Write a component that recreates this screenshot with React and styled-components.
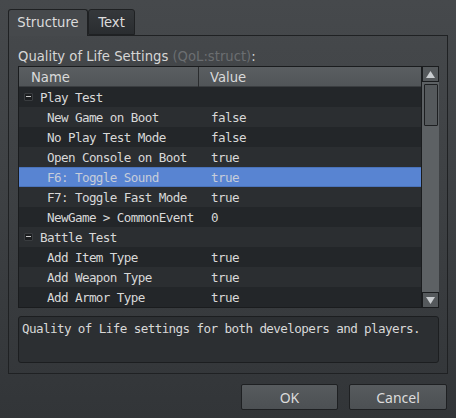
import React from "react";
import styled, { createGlobalStyle } from "styled-components";

const Global = createGlobalStyle`
  html, body { margin: 0; padding: 0; }
  body {
    width: 456px; height: 418px; overflow: hidden;
    background: linear-gradient(180deg, #46494c 0%, #3d4043 50%, #323538 100%);
    font-family: "DejaVu Sans", sans-serif;
  }
`;

const Window = styled.div`
  width: 456px; height: 418px; box-sizing: border-box;
  padding: 9px 9px 0 8px;
  display: flex; flex-direction: column;
`;

const TabBar = styled.div`
  display: flex; align-items: flex-end; height: 26px;
`;

const Tab = styled.div`
  box-sizing: border-box;
  width: ${p => p.$w}px;
  height: ${p => (p.$active ? 27 : 26)}px;
  margin-bottom: ${p => (p.$active ? -1 : 0)}px;
  display: flex; align-items: center; justify-content: center;
  border: 1px solid #1f2123;
  border-bottom: ${p => (p.$active ? "none" : "1px solid #1f2123")};
  border-radius: 3px 3px 0 0;
  background: ${p => (p.$active ? "#46494c" : "linear-gradient(180deg,#35383b,#2a2d30)")};
  color: #dcdcdc;
  font-size: 13.2px;
  position: relative; z-index: 1;
  ${p => (p.$active ? "padding-bottom: 1px;" : "margin-top: 1px;")}
`;

const Panel = styled.div`
  box-sizing: border-box;
  width: 440px; height: 339px;
  border: 1px solid #1f2123;
  padding: 0 8px 9px 9px;
  display: flex; flex-direction: column;
`;

const Label = styled.div`
  height: 20px; margin-top: 10px;
  font-size: 13.2px; line-height: 21px; color: #d6d6d6;
  span { color: #6b6e71; }
`;

const Table = styled.div`
  box-sizing: border-box; height: 242px;
  border: 1px solid #1a1c1e;
  display: flex; background: #25282b;
`;

const Main = styled.div`
  flex: 1; display: flex; flex-direction: column; min-width: 0;
`;

const Header = styled.div`
  height: 20px; display: grid; grid-template-columns: 180px 1fr;
  background: linear-gradient(180deg, #5a5e61, #505457);
  box-shadow: inset 0 -1px 0 #3a3d40;
`;

const HeadCell = styled.div`
  padding-left: ${p => p.$pad}px;
  font-size: 13.2px; line-height: 21px; color: #dadada;
  border-right: 1px solid ${p => (p.$divider ? "#2a2c2e" : "transparent")};
`;

const Row = styled.div`
  box-sizing: border-box;
  height: 20px; display: grid; grid-template-columns: 180px 1fr; align-items: center;
  background: ${p => (p.$selected ? "#5884d2" : p.$odd ? "#2b2e31" : "#232629")};
  ${p => p.$selected && "border-top: 1px solid #4a73bb; border-bottom: 1px solid #4a73bb;"}
  font-family: "DejaVu Sans Mono", monospace;
  font-size: 12.6px; letter-spacing: -0.6px;
  color: ${p => (p.$selected ? "#c6cdda" : "#d8d8d8")};
  white-space: nowrap;
`;

const NameCell = styled.div`
  padding-left: ${p => (p.$group ? 5 : 28)}px;
  display: flex; align-items: center; gap: 7px;
`;

const ValueCell = styled.div`
  padding-left: 12px;
`;

const Toggle = styled.span`
  width: 9px; height: 8px; box-sizing: border-box;
  background: #1c1e20; border: 1px solid #3a3d40; border-radius: 1px;
  position: relative;
  &::after {
    content: ""; position: absolute; left: 1px; right: 1px; top: 2px; height: 1px; background: #c8c8c8;
  }
`;

const ScrollBar = styled.div`
  width: 17px; margin: -1px -1px -1px 0; display: flex; flex-direction: column;
  background: #5d6164; border-left: 1px solid #1a1c1e;
`;

const ScrollBtn = styled.div`
  height: 16px; box-sizing: border-box; display: flex; align-items: center; justify-content: center;
  background: #55595c; border: 1px solid #1a1c1e;
`;

const Thumb = styled.div`
  height: 42px; margin: 2px 1px 0 2px; box-sizing: border-box;
  background: #55595c; border: 1px solid #1d1f21; border-radius: 1px;
`;

const Track = styled.div` flex: 1; `;

const Desc = styled.div`
  box-sizing: border-box; height: 47px; margin-top: 8px;
  border: 1px solid #1c1e20; border-radius: 3px;
  background: #2c2f32;
  padding: 4px 3px;
  font-family: "DejaVu Sans Mono", monospace; font-size: 12.6px; letter-spacing: -0.6px;
  color: #d8d8d8;
  line-height: 16px; white-space: nowrap;
`;

const Buttons = styled.div`
  display: flex; justify-content: flex-end; gap: 11px; margin-top: 10px;
`;

const Button = styled.button`
  width: ${p => p.$w}px; height: 26px;
  border: 1px solid #1e2022; border-radius: 2px;
  background: linear-gradient(180deg, #575b5e, #4c5053);
  color: #dcdcdc; font-family: "Noto Sans", sans-serif; font-size: 14px;
  padding: 0;
`;

const Tri = ({ down }) => (
  <svg width="9" height="7" viewBox="0 0 9 7">
    <path d={down ? "M0 0 L9 0 L4.5 7 Z" : "M0 7 L9 7 L4.5 0 Z"} fill="#c9cdd0" />
  </svg>
);

const rows = [
  { group: true, name: "Play Test" },
  { name: "New Game on Boot", value: "false" },
  { name: "No Play Test Mode", value: "false" },
  { name: "Open Console on Boot", value: "true" },
  { name: "F6: Toggle Sound", value: "true", selected: true },
  { name: "F7: Toggle Fast Mode", value: "true" },
  { name: "NewGame > CommonEvent", value: "0" },
  { group: true, name: "Battle Test" },
  { name: "Add Item Type", value: "true" },
  { name: "Add Weapon Type", value: "true" },
  { name: "Add Armor Type", value: "true" },
];

export default function App() {
  return (
    <>
      <Global />
      <Window>
        <TabBar>
          <Tab $active $w={80}>Structure</Tab>
          <Tab $w={47}>Text</Tab>
        </TabBar>
        <Panel>
          <Label>Quality of Life Settings <span>(QoL:struct)</span>:</Label>
          <Table>
            <Main>
              <Header>
                <HeadCell $pad={12} $divider>Name</HeadCell>
                <HeadCell $pad={11}>Value</HeadCell>
              </Header>
              {rows.map((r, i) => (
                <Row key={i} $odd={i % 2 === 1} $selected={r.selected}>
                  <NameCell $group={r.group}>
                    {r.group && <Toggle />}
                    {r.name}
                  </NameCell>
                  <ValueCell>{r.value}</ValueCell>
                </Row>
              ))}
            </Main>
            <ScrollBar>
              <ScrollBtn><Tri /></ScrollBtn>
              <Thumb />
              <Track />
              <ScrollBtn><Tri down /></ScrollBtn>
            </ScrollBar>
          </Table>
          <Desc>Quality of Life settings for both developers and players.</Desc>
        </Panel>
        <Buttons>
          <Button $w={97}>OK</Button>
          <Button $w={98}>Cancel</Button>
        </Buttons>
      </Window>
    </>
  );
}
